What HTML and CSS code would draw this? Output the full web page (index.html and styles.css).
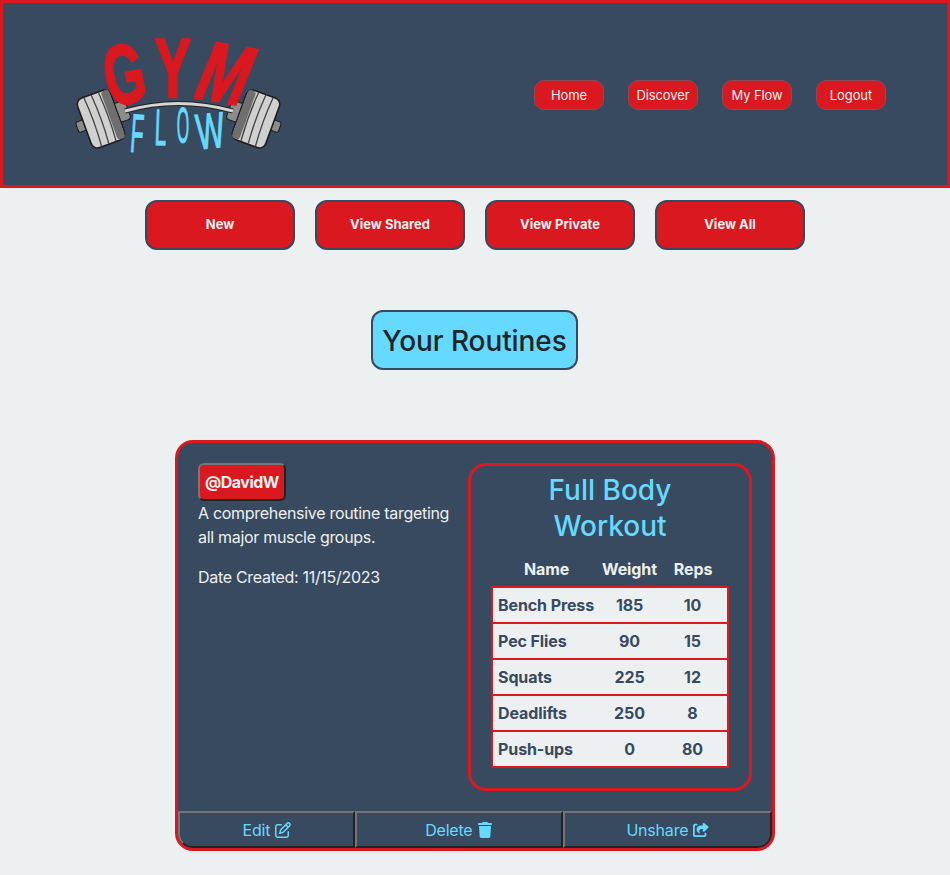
FILE: index.html
```html
<!DOCTYPE html>
<html lang="en">

<head>
    <meta charset="UTF-8">
    <meta name="viewport" content="width=device-width, initial-scale=1.0">
    <title>Gym Flow</title>
    <link rel="stylesheet" href="styles.css">
</head>

<body>
    <header class="site-header">
        <svg class="logo" viewBox="0 0 240 135" role="img" aria-label="Gym Flow">
            <defs>
                <g id="weight">
                    <rect x="-23" y="-5" width="10" height="10" rx="2" fill="#8c8c8c" stroke="#222" stroke-width="1"/>
                    <rect x="13" y="-9" width="13" height="18" rx="3" fill="#8c8c8c" stroke="#222" stroke-width="1"/>
                    <rect x="-16" y="-24" width="32" height="48" rx="6" fill="#d0d0d0" stroke="#1d1d1d" stroke-width="1.4"/>
                    <rect x="8" y="-23.3" width="7.4" height="46.6" rx="3" fill="#6f6f6f"/>
                    <path class="plate-line" d="M-8 -23.5Q-6 0 -8 23.5M-1 -23.5Q1 0 -1 23.5M6 -23.5Q8 0 6 23.5"/>
                </g>
            </defs>
            <use href="#weight" transform="translate(41 89) rotate(-20) scale(1.1)"/>
            <use href="#weight" transform="translate(196 89) scale(-1 1) rotate(-20) scale(1.1)"/>
            <path d="M65 81Q118 66 173 81" fill="none" stroke="#222" stroke-width="5"/>
            <path d="M65 81Q118 66 173 81" fill="none" stroke="#d4d4d4" stroke-width="3"/>
            <text class="logo-gym" transform="translate(70 73) rotate(-11) scale(.62 1)">G</text>
            <text class="logo-gym" transform="translate(113 67) scale(.65 1)">Y</text>
            <text class="logo-gym" transform="translate(155 71) rotate(10) skewX(-12) scale(.72 1)">M</text>
            <text class="logo-flow" transform="translate(76 122) rotate(4) scale(.42 1.08)">F</text>
            <text class="logo-flow" transform="translate(100 115) rotate(2) scale(.42 1.02)">L</text>
            <text class="logo-flow" transform="translate(123 113) scale(.32 1)">O</text>
            <text class="logo-flow" transform="translate(152 118) rotate(-6) scale(.6 1)">W</text>
        </svg>
        <nav class="main-nav">
            <a href="#" class="nav-btn">Home</a>
            <a href="#" class="nav-btn">Discover</a>
            <a href="#" class="nav-btn">My Flow</a>
            <a href="#" class="nav-btn">Logout</a>
        </nav>
    </header>

    <main>
        <div class="filters">
            <button class="filter-btn">New</button>
            <button class="filter-btn">View Shared</button>
            <button class="filter-btn">View Private</button>
            <button class="filter-btn">View All</button>
        </div>

        <h1 class="page-title">Your Routines</h1>

        <section class="routine">
            <div class="routine__body">
                <div class="routine__info">
                    <button class="user-tag">@DavidW</button>
                    <p>A comprehensive routine targeting all major muscle groups.</p>
                    <p>Date Created: 11/15/2023</p>
                </div>
                <div class="routine__workout">
                    <h2>Full Body Workout</h2>
                    <table>
                        <thead>
                            <tr>
                                <th class="col-name">Name</th>
                                <th class="col-weight">Weight</th>
                                <th class="col-reps">Reps</th>
                            </tr>
                        </thead>
                        <tbody>
                            <tr><td>Bench Press</td><td>185</td><td>10</td></tr>
                            <tr><td>Pec Flies</td><td>90</td><td>15</td></tr>
                            <tr><td>Squats</td><td>225</td><td>12</td></tr>
                            <tr><td>Deadlifts</td><td>250</td><td>8</td></tr>
                            <tr><td>Push-ups</td><td>0</td><td>80</td></tr>
                        </tbody>
                    </table>
                </div>
            </div>
            <div class="routine__actions">
                <button class="action-btn">Edit
                    <svg class="icon" viewBox="0 0 512 512"><path d="M441 58.9L453.1 71c9.4 9.4 9.4 24.6 0 33.9L424 134.1 377.9 88 407 58.9c9.4-9.4 24.6-9.4 33.9 0zM209.8 256.2L344 121.9 390.1 168 255.8 302.2c-2.9 2.9-6.5 5-10.4 6.1l-58.5 16.7 16.7-58.5c1.1-3.9 3.2-7.5 6.1-10.4zM373.1 25L175.8 222.2c-8.7 8.7-15 19.4-18.3 31.1l-28.6 100c-2.4 8.4-.1 17.4 6.1 23.6s15.2 8.5 23.6 6.1l100-28.6c11.8-3.4 22.5-9.7 31.1-18.3L487 138.9c28.1-28.1 28.1-73.7 0-101.8L474.9 25C446.8-3.1 401.2-3.1 373.1 25zM88 64C39.4 64 0 103.4 0 152V424c0 48.6 39.4 88 88 88H360c48.6 0 88-39.4 88-88V312c0-13.3-10.7-24-24-24s-24 10.7-24 24V424c0 22.1-17.9 40-40 40H88c-22.1 0-40-17.9-40-40V152c0-22.1 17.9-40 40-40H200c13.3 0 24-10.7 24-24s-10.7-24-24-24H88z"/></svg>
                </button>
                <button class="action-btn">Delete
                    <svg class="icon" viewBox="0 0 448 512"><path d="M135.2 17.7L128 32H32C14.3 32 0 46.3 0 64S14.3 96 32 96H416c17.7 0 32-14.3 32-32s-14.3-32-32-32H320l-7.2-14.3C307.4 6.8 296.3 0 284.2 0H163.8c-12.1 0-23.2 6.8-28.6 17.7zM416 128H32L53.2 467c1.6 25.3 22.6 45 47.9 45H346.9c25.3 0 46.3-19.7 47.9-45L416 128z"/></svg>
                </button>
                <button class="action-btn">Unshare
                    <svg class="icon" viewBox="0 0 576 512"><path d="M352 224H305.5c-45 0-81.5 36.5-81.5 81.5c0 22.3 10.3 34.3 19.2 40.5c6.8 4.7 12.8 12 12.8 20.3c0 9.8-8 17.8-17.8 17.8h-2.5c-2.4 0-4.8-.4-7.1-1.4C210.8 374.8 128 333.4 128 240c0-79.5 64.5-144 144-144h80V34.7C352 15.5 367.5 0 386.7 0c8.6 0 16.8 3.2 23.2 8.9L548.1 133.3c7.6 6.8 11.9 16.5 11.9 26.7s-4.3 19.9-11.9 26.7l-139 125.1c-5.9 5.3-13.5 8.2-21.4 8.2H384c-17.7 0-32-14.3-32-32V224zM80 96c-8.8 0-16 7.2-16 16V432c0 8.8 7.2 16 16 16H400c8.8 0 16-7.2 16-16V384c0-17.7 14.3-32 32-32s32 14.3 32 32v48c0 44.2-35.8 80-80 80H80c-44.2 0-80-35.8-80-80V112C0 67.8 35.8 32 80 32h48c17.7 0 32 14.3 32 32s-14.3 32-32 32H80z"/></svg>
                </button>
            </div>
        </section>
    </main>
</body>

</html>
```

FILE: styles.css
```css
*,
*::before,
*::after {
    box-sizing: border-box;
}

body {
    margin: 0;
    font-family: Inter, "Liberation Sans", sans-serif;
    font-size: 16px;
    line-height: 24px;
    color: #ecf0f1;
    background: #ecf0f1;
}

button {
    font-family: inherit;
}

/* header */
.site-header {
    height: 188px;
    display: flex;
    align-items: center;
    justify-content: space-between;
    padding: 7px 61px 0 57px;
    background: #384a5f;
    border: 3px solid #d9181f;
}

.logo {
    width: 240px;
    height: 135px;
    flex: none;
    overflow: visible;
}

.logo-gym {
    font-family: "Liberation Sans", sans-serif;
    font-weight: bold;
    font-size: 84px;
    text-anchor: middle;
    fill: #d9181f;
    stroke: #d9181f;
    stroke-width: 2.4;
}

.logo-flow {
    font-family: "Liberation Sans", sans-serif;
    font-size: 50px;
    text-anchor: middle;
    fill: #66d9ff;
    stroke: #66d9ff;
    stroke-width: 1.2;
}

.plate-line {
    fill: none;
    stroke: #444;
    stroke-width: 1.2;
}

.main-nav {
    display: flex;
    gap: 24px;
    margin-top: -6px;
}

.nav-btn {
    width: 70px;
    height: 30px;
    display: flex;
    align-items: center;
    justify-content: center;
    font-size: 13px;
    letter-spacing: -0.1px;
    color: #ecf0f1;
    text-decoration: none;
    background: #d9181f;
    border: 1px solid #8a4a55;
    border-radius: 10px;
}

/* filter buttons */
.filters {
    display: flex;
    justify-content: center;
    gap: 20px;
    padding-top: 12px;
}

.filter-btn {
    width: 150px;
    height: 50px;
    padding: 0 0 2px;
    font-size: 13px;
    font-weight: 700;
    color: #ecf0f1;
    background: #d9181f;
    border: 2px solid #384a5f;
    border-radius: 12px;
}

/* title */
.page-title {
    width: 207px;
    height: 60px;
    margin: 60px 0 70px 371px;
    font-size: 28px;
    font-weight: 500;
    line-height: 58px;
    letter-spacing: -0.1px;
    text-align: center;
    color: #212529;
    background: #66d9ff;
    border: 2px solid #384a5f;
    border-radius: 12px;
}

/* routine card */
.routine {
    width: 600px;
    margin: 0 auto 24px;
    overflow: hidden;
    background: #384a5f;
    border: 3px solid #d9181f;
    border-radius: 18px;
}

.routine__body {
    display: flex;
    justify-content: space-between;
    padding: 20px;
}

.routine__info {
    width: 256px;
    letter-spacing: -0.3px;
}

.routine__info p {
    margin: 0 0 16px;
}

.user-tag {
    display: block;
    height: 38px;
    padding: 0 5px;
    font-size: 16px;
    font-weight: 700;
    letter-spacing: -0.5px;
    color: #ecf0f1;
    background: #d9181f;
    border: 2px solid;
    border-color: #777 #222 #222 #777;
    border-radius: 6px;
}

.routine__workout {
    width: 284px;
    padding: 6px 20px 20px;
    border: 3px solid #d9181f;
    border-radius: 18px;
}

.routine__workout h2 {
    margin: 0 0 7px;
    padding: 0 20px;
    font-size: 28px;
    font-weight: 500;
    line-height: 36px;
    text-align: center;
    color: #66d9ff;
}

/* exercises */
table {
    width: 238px;
    table-layout: fixed;
    border-collapse: collapse;
    font-weight: 700;
    letter-spacing: -0.1px;
}

th {
    height: 36px;
    padding: 0;
    color: #ecf0f1;
}

.col-name {
    width: 109px;
}

.col-weight {
    width: 57px;
}

td {
    height: 36px;
    padding: 0;
    text-align: center;
    color: #384a5f;
    background: #ecf0f1;
    border-top: 2px solid #d9181f;
    border-bottom: 2px solid #d9181f;
}

td:first-child {
    padding-left: 5px;
    text-align: left;
    white-space: nowrap;
    border-left: 2px solid #d9181f;
}

td:last-child {
    border-right: 2px solid #d9181f;
}

/* bottom buttons */
.routine__actions {
    display: grid;
    grid-template-columns: 177px 208px 1fr;
    height: 37px;
}

.action-btn {
    padding: 0;
    font-size: 16px;
    letter-spacing: -0.2px;
    color: #66d9ff;
    background: #384a5f;
    border: 2px solid;
    border-color: #757575 #222 #222 #757575;
}

.action-btn:first-child {
    border-bottom-left-radius: 14px;
}

.action-btn:last-child {
    border-bottom-right-radius: 14px;
}

.icon {
    width: 16px;
    height: 16px;
    vertical-align: -2px;
    fill: #66d9ff;
}
```
